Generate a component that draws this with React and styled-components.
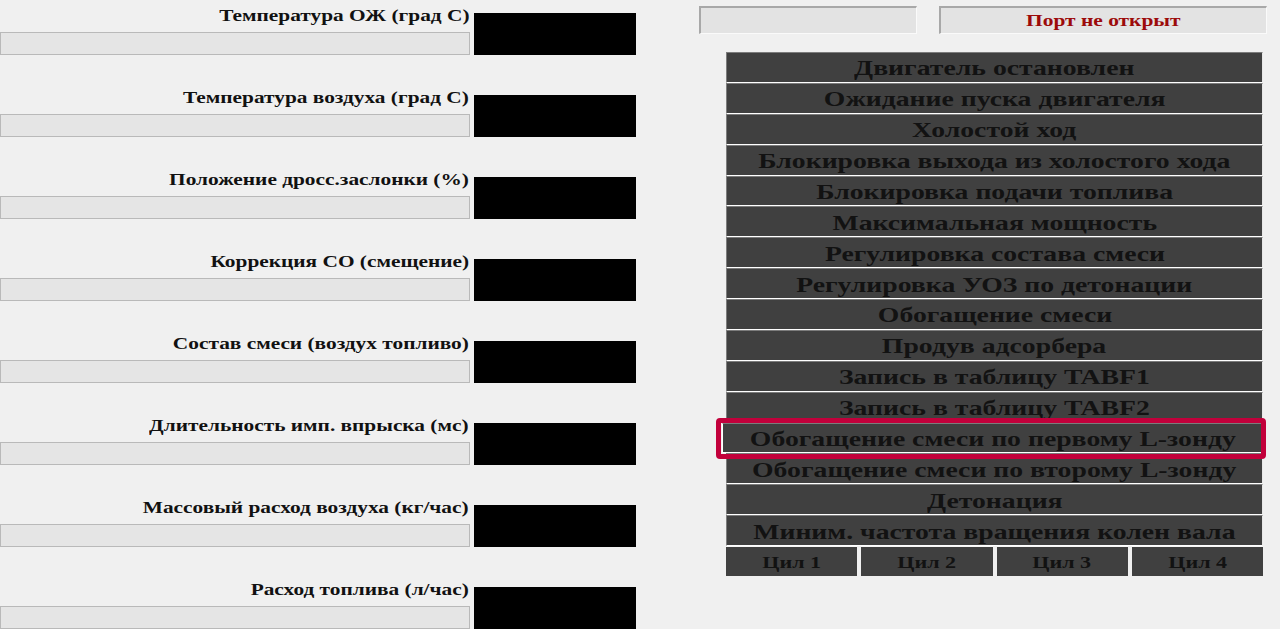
import React from "react";
import styled, { createGlobalStyle } from "styled-components";

const Global = createGlobalStyle`
  html, body { margin: 0; padding: 0; background: #f0f0f0; }
  body { height: 629px; overflow: hidden; font-family: "Liberation Serif", "Times New Roman", serif; }
`;

const Page = styled.div`
  display: flex;
  align-items: flex-start;
  width: 1280px;
  height: 629px;
  overflow: hidden;
`;

const Wide = styled.span`
  display: inline-block;
  white-space: nowrap;
  transform: scaleX(${(p) => p.$sx || 1.26});
  transform-origin: ${(p) => p.$origin || "center"};
`;

const LeftColumn = styled.div`
  width: 636px;
  display: flex;
  flex-direction: column;
  gap: 34px;
  padding-top: 7px;
`;

const Group = styled.div`
  display: flex;
  align-items: flex-end;
  gap: 4px;
  height: 48px;
  flex-shrink: 0;
`;

const Field = styled.div`
  width: 470px;
  display: flex;
  flex-direction: column;
`;

const Label = styled.div`
  text-align: right;
  font-weight: bold;
  font-size: 17px;
  line-height: 18px;
  color: #111;
  padding-right: 1px;
  margin-bottom: 7px;
  white-space: nowrap;
`;

const Bar = styled.div`
  height: 21px;
  background: #e5e5e5;
  border: 1px solid #b9b9b9;
`;

const ValueBox = styled.div`
  width: 162px;
  height: 42px;
  background: #000;
`;

const RightColumn = styled.div`
  margin-left: 63px;
  width: 569px;
  display: flex;
  flex-direction: column;
  padding-top: 6px;
`;

const TopRow = styled.div`
  display: flex;
  gap: 22px;
`;

const StatusBox = styled.div`
  box-sizing: border-box;
  width: ${(p) => p.$w}px;
  height: 28px;
  background: #e3e3e3;
  border-top: 2px solid #a8a8a8;
  border-left: 2px solid #a8a8a8;
  border-bottom: 1px solid #fafafa;
  border-right: 1px solid #fafafa;
  display: flex;
  align-items: center;
  justify-content: center;
  font-weight: bold;
  font-size: 17px;
  color: #9c0a0a;
`;

const StateList = styled.div`
  margin-top: 18px;
  margin-left: 27px;
  width: 537px;
  height: 494px;
  display: flex;
  flex-direction: column;
`;

const StateRow = styled.div`
  position: relative;
  box-sizing: border-box;
  flex: 1 1 0;
  background: #404040;
  border-top: 1px solid #7c7c7c;
  border-left: 1px solid ${(p) => (p.$selected ? "#ffffff" : "#7c7c7c")};
  border-bottom: 1px solid #ffffff;
  border-right: 1px solid #e8e8e8;
  margin-left: ${(p) => (p.$selected ? "-4px" : "0")};
  display: flex;
  align-items: center;
  justify-content: center;
  font-weight: bold;
  font-size: 22px;
  line-height: 1;
  color: #121212;
  white-space: nowrap;
  padding-top: 2px;

  ${(p) =>
    p.$selected &&
    `
    &::after {
      content: "";
      position: absolute;
      top: -6px;
      bottom: -7px;
      left: -7px;
      right: -4px;
      border: 5px solid #c2003b;
      border-radius: 4px;
      pointer-events: none;
      z-index: 2;
    }
  `}
`;

const CylRow = styled.div`
  margin-left: 27px;
  width: 537px;
  height: 30px;
  display: grid;
  grid-template-columns: repeat(4, 1fr);
  gap: 4px;
`;

const CylButton = styled.div`
  box-sizing: border-box;
  background: #404040;
  border-top: 1px solid #f8f8f8;
  display: flex;
  align-items: center;
  justify-content: center;
  font-weight: bold;
  font-size: 17px;
  color: #121212;
  padding-top: 2px;
`;

const fields = [
  "Температура ОЖ (град С)",
  "Температура воздуха (град С)",
  "Положение дросс.заслонки (%)",
  "Коррекция СО (смещение)",
  "Состав смеси (воздух топливо)",
  "Длительность имп. впрыска (мс)",
  "Массовый расход воздуха (кг/час)",
  "Расход топлива (л/час)",
];

const states = [
  "Двигатель остановлен",
  "Ожидание пуска двигателя",
  "Холостой ход",
  "Блокировка выхода из холостого хода",
  "Блокировка подачи топлива",
  "Максимальная мощность",
  "Регулировка состава смеси",
  "Регулировка УОЗ по детонации",
  "Обогащение смеси",
  "Продув адсорбера",
  "Запись в таблицу TABF1",
  "Запись в таблицу TABF2",
  "Обогащение смеси по первому L-зонду",
  "Обогащение смеси по второму L-зонду",
  "Детонация",
  "Миним. частота вращения колен вала",
];

export default function App() {
  return (
    <>
      <Global />
      <Page>
        <LeftColumn>
          {fields.map((f) => (
            <Group key={f}>
              <Field>
                <Label>
                  <Wide $origin="right" $sx={1.255}>{f}</Wide>
                </Label>
                <Bar />
              </Field>
              <ValueBox />
            </Group>
          ))}
        </LeftColumn>
        <RightColumn>
          <TopRow>
            <StatusBox $w={218} />
            <StatusBox $w={328}>
              <Wide>Порт не открыт</Wide>
            </StatusBox>
          </TopRow>
          <StateList>
            {states.map((s, i) => (
              <StateRow key={s} $selected={i === 12}>
                <Wide>{s}</Wide>
              </StateRow>
            ))}
          </StateList>
          <CylRow>
            {[1, 2, 3, 4].map((n) => (
              <CylButton key={n}>
                <Wide $sx={1.3}>Цил {n}</Wide>
              </CylButton>
            ))}
          </CylRow>
        </RightColumn>
      </Page>
    </>
  );
}
